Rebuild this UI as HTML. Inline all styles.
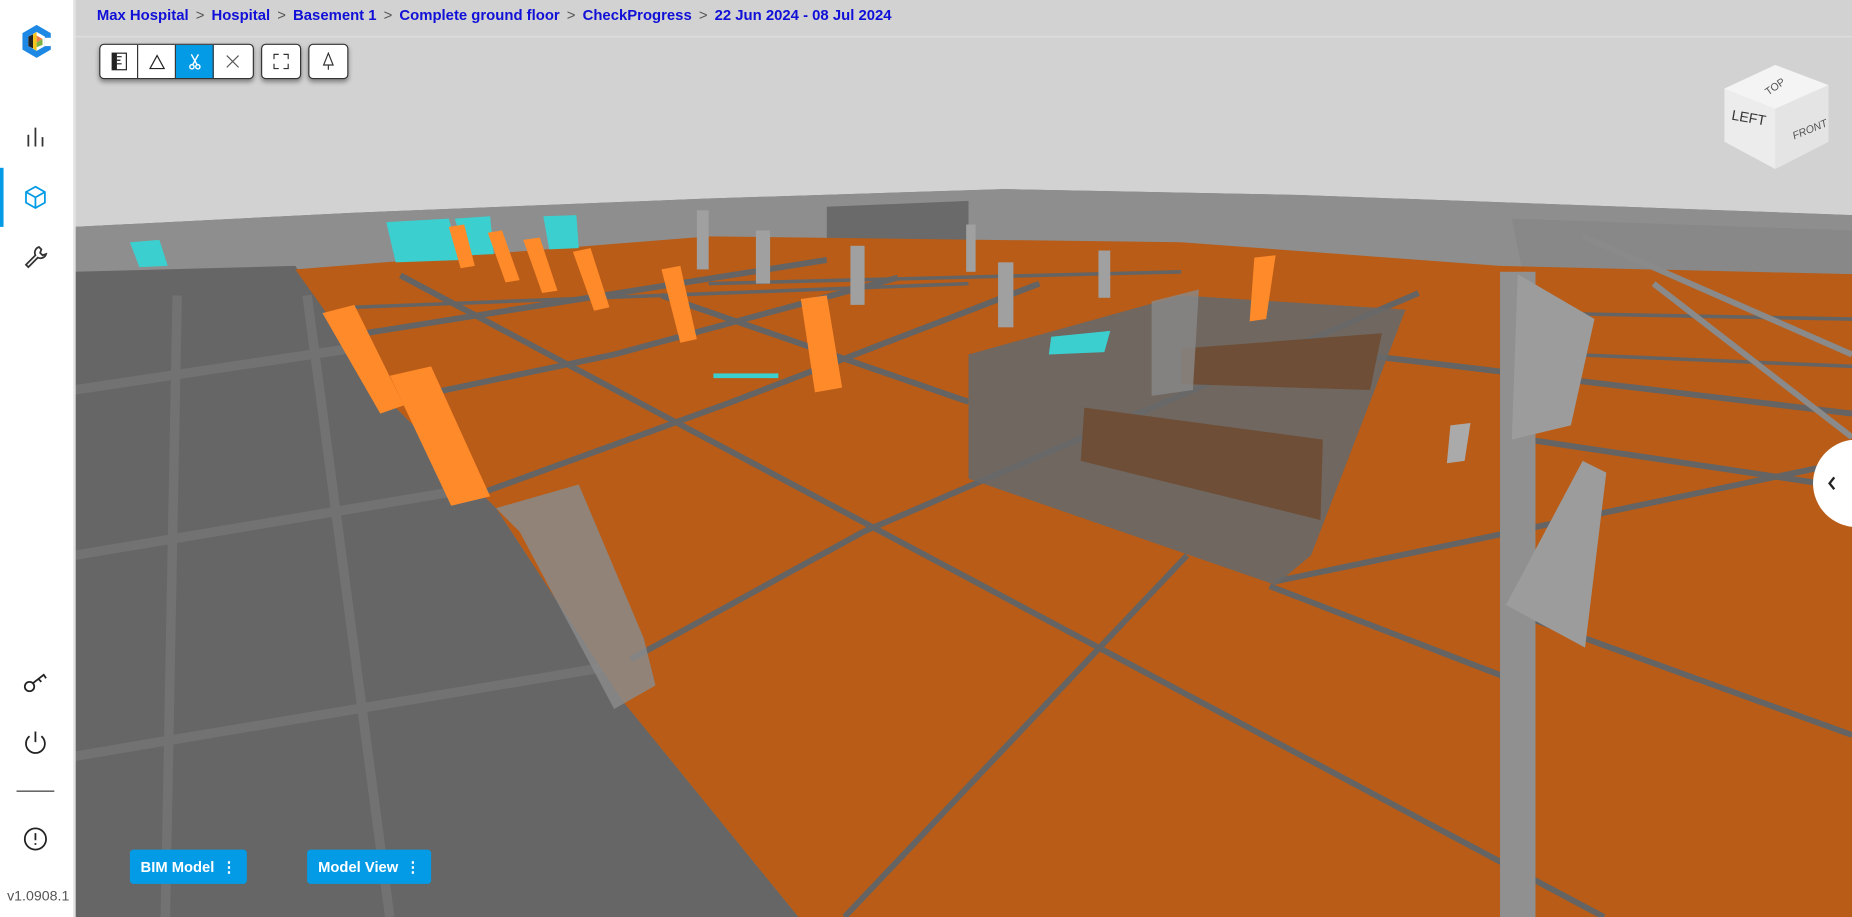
<!DOCTYPE html>
<html><head><meta charset="utf-8"><style>
html,body{margin:0;padding:0;width:1852px;height:917px;overflow:hidden;background:#d2d2d2}
#w{position:absolute;left:0;top:0;width:1568px;height:776px;transform-origin:0 0;transform:scale(1.18112,1.18170);font-family:"Liberation Sans",sans-serif}
#side{position:absolute;left:0;top:0;width:62px;height:776px;background:#fff;border-right:2px solid #e2e2e2}
.ic{position:absolute;left:19px}
#bc{position:absolute;left:82px;top:6px;font-weight:bold;font-size:12.6px;color:#1010d8;white-space:nowrap}
#bc span.s{color:#555;font-weight:normal;margin:0 6px}
.tb{position:absolute;top:37px;height:28px;background:#fff;border:1px solid #333;border-radius:4px;box-shadow:0 2px 4px rgba(0,0,0,.4);display:flex;overflow:hidden}
.tb div{width:32px;height:28px;display:flex;align-items:center;justify-content:center;border-right:1px solid #333;box-sizing:border-box}
.tb div:last-child{border-right:none}
.btn{position:absolute;top:719px;height:29px;background:#039be5;color:#fff;font-weight:bold;font-size:12.5px;border-radius:3px;display:flex;align-items:center;justify-content:center;gap:6px}
</style></head><body><div id="w">
<svg width="1568" height="776" viewBox="0 0 1568 776" style="position:absolute;left:0;top:0">
<rect width="1568" height="776" fill="#d2d2d2"/>
<line x1="63" y1="31" x2="1568" y2="31" stroke="#dcdcdc" stroke-width="1.5"/>
<polygon points="63,192 300,180 600,168 850,160 1100,165 1568,182 1568,776 63,776" fill="#7b7b7b"/>
<polygon points="63,192 300,180 600,168 850,160 1100,165 1568,182 1568,240 1000,215 600,210 63,240" fill="#8e8e8e"/>
<polygon points="700,175 820,170 820,205 700,210" fill="#6a6a6a"/>
<polygon points="1280,185 1568,195 1568,270 1290,235" fill="#888"/>
<polygon points="63,230 250,225 330,340 420,430 527,593 676,776 63,776" fill="#666"/>
<g stroke="#787878" stroke-width="8" opacity=".7"><line x1="63" y1="330" x2="330" y2="290"/><line x1="63" y1="470" x2="420" y2="410"/><line x1="63" y1="640" x2="540" y2="560"/><line x1="150" y1="250" x2="140" y2="776"/><line x1="260" y1="250" x2="330" y2="776"/></g>
<polygon points="250,228 600,200 1000,205 1270,225 1568,232 1568,776 676,776 527,593 420,430 330,340" fill="#b95c17"/>
<g stroke="#646464" stroke-width="5" fill="none">
<line x1="339" y1="233" x2="1358" y2="776"/>
<line x1="1075" y1="496" x2="1272" y2="572"/><line x1="1300" y1="525" x2="1568" y2="622"/>
<line x1="1280" y1="370" x2="1568" y2="413"/>
<line x1="1150" y1="300" x2="1568" y2="350"/>
<line x1="560" y1="250" x2="820" y2="340"/>
<line x1="715" y1="776" x2="1005" y2="470"/>
<line x1="534" y1="558" x2="731" y2="450" /><line x1="731" y1="450" x2="1201" y2="248"/>
<line x1="400" y1="420" x2="620" y2="340"/><line x1="620" y1="340" x2="880" y2="240"/>
<line x1="330" y1="340" x2="520" y2="300"/><line x1="520" y1="300" x2="760" y2="235"/>
<line x1="290" y1="285" x2="700" y2="220"/>
<line x1="1080" y1="492" x2="1568" y2="390"/>
</g>
<g stroke="#646464" stroke-width="3"><line x1="300" y1="260" x2="820" y2="240"/><line x1="600" y1="240" x2="1000" y2="230"/><line x1="1300" y1="265" x2="1568" y2="270"/><line x1="1330" y1="300" x2="1568" y2="310"/></g>
<g stroke="#8a8a8a" stroke-width="5"><line x1="1340" y1="200" x2="1568" y2="300"/><line x1="1400" y1="240" x2="1568" y2="370"/></g>
<polygon points="820,300 1000,250 1190,262 1110,470 1080,495 820,405" fill="#686868" opacity=".9"/>
<polygon points="1000,295 1170,282 1160,330 1000,325" fill="#6e4e36"/>
<polygon points="918,345 1120,372 1118,440 915,390" fill="#6e4e36"/>
<polygon points="975,255 1015,245 1010,330 975,335" fill="#8a8a8a" opacity=".8"/>
<polygon points="420,430 490,410 545,540 555,580 520,600 440,450" fill="#8a8a8a" opacity=".85"/>
<polygon points="1270,230 1300,230 1300,776 1270,776" fill="#909090"/>
<polygon points="1285,232 1350,270 1330,360 1280,372" fill="#9c9c9c"/>
<polygon points="1275,512 1340,390 1360,400 1342,548" fill="#9c9c9c"/>
<polygon points="1228,360 1245,358 1240,390 1225,392" fill="#aaa"/>
<g fill="#3ccfcf"><polygon points="327,188 380,185 390,220 335,222"/><polygon points="385,185 415,183 418,215 395,216"/><polygon points="460,183 488,182 490,210 465,211"/><polygon points="110,205 135,203 142,225 118,226"/><polygon points="890,285 940,280 935,298 888,300"/><rect x="604" y="316" width="55" height="4"/></g>
<g fill="#ff8a2a">
<polygon points="273,265 300,258 342,343 322,350"/><polygon points="330,318 365,310 415,420 382,428"/>
<polygon points="380,192 393,190 402,225 390,227"/><polygon points="413,197 425,195 440,237 428,239"/><polygon points="443,203 457,201 472,246 459,248"/><polygon points="485,213 500,210 516,260 503,263"/><polygon points="560,228 576,225 590,287 576,290"/><polygon points="678,253 700,250 713,328 690,332"/><polygon points="1062,218 1080,216 1072,270 1058,272"/>
</g>
<g fill="#a0a0a0"><rect x="590" y="178" width="10" height="50"/><rect x="640" y="195" width="12" height="45"/><rect x="720" y="208" width="12" height="50"/><rect x="845" y="222" width="13" height="55"/><rect x="930" y="212" width="10" height="40"/><rect x="818" y="190" width="8" height="40"/></g>
<polygon points="1503,55 1548,72 1548,120 1503,143 1460,120 1460,75" fill="#ececec"/>
<polygon points="1503,55 1548,72 1503,92 1460,75" fill="#f4f4f4"/>
<polygon points="1503,92 1548,72 1548,120 1503,143" fill="#e4e4e4"/>
<text x="1466" y="104" font-size="12" fill="#333" transform="rotate(10 1482 100)">LEFT</text>
<text x="1515" y="113" font-size="9" fill="#555" font-style="italic" transform="rotate(-22 1530 105)">FRONT</text>
<text x="1493" y="76" font-size="9" fill="#555" transform="rotate(-35 1503 72)">TOP</text>
<circle cx="1572" cy="409" r="37" fill="#fff"/>
<path d="M1553,404 l-4,5 4,5" stroke="#222" stroke-width="2" fill="none"/>
</svg>
<div id="side">
<svg class="ic" style="left:17px;top:20px" width="28" height="30" viewBox="0 0 28 30"><polygon points="14,1 26,8 26,22 14,29 2,22 2,8" fill="#1e88e5"/><polygon points="14,7 21,11 21,19 14,23 7,19 7,11" fill="#fff"/><polygon points="7,11 11,9 11,21 7,19" fill="#222"/><polygon points="11,9 11,21 14,23 14,7" fill="#f5c518"/><polygon points="14,10 19,13 14,16" fill="#f07d4a"/><polygon points="14,16 19,13 19,18 14,20" fill="#7cb342"/><rect x="21" y="12" width="6" height="7" fill="#fff"/></svg>
<svg class="ic" style="top:106px" width="22" height="20" viewBox="0 0 22 20" stroke="#333" stroke-width="1.5"><line x1="5" y1="8" x2="5" y2="18"/><line x1="11" y1="2" x2="11" y2="18"/><line x1="17" y1="10" x2="17" y2="18"/></svg>
<div style="position:absolute;left:0;top:142px;width:3px;height:50px;background:#039be5"></div>
<svg class="ic" style="top:156px" width="22" height="22" viewBox="0 0 22 22" fill="none" stroke="#039be5" stroke-width="1.5"><path d="M11 2 19 6.5 19 15.5 11 20 3 15.5 3 6.5Z M3 6.5 11 11 19 6.5 M11 11 11 20"/></svg>
<svg class="ic" style="top:206px" width="22" height="22" viewBox="0 0 22 22" fill="none" stroke="#333" stroke-width="1.5"><path d="M14 3a5 5 0 0 0-3 7l-8 8 2 2 8-8a5 5 0 0 0 7-3l-3 1-2-2 1-3z"/></svg>
<svg class="ic" style="top:566px" width="22" height="22" viewBox="0 0 22 22" fill="none" stroke="#222" stroke-width="1.5"><circle cx="6" cy="15" r="4"/><path d="M9 12 18 5 20 8 M14 9 16 11"/></svg>
<svg class="ic" style="top:617px" width="22" height="22" viewBox="0 0 22 22" fill="none" stroke="#222" stroke-width="1.5"><path d="M6 6a8 8 0 1 0 10 0 M11 2 11 11"/></svg>
<div style="position:absolute;left:14px;top:669px;width:32px;height:1px;background:#333"></div>
<svg class="ic" style="top:699px" width="22" height="22" viewBox="0 0 22 22" fill="none" stroke="#222" stroke-width="1.5"><circle cx="11" cy="11" r="9"/><path d="M11 6 11 12 M11 14.5 11 16"/></svg>
<div style="position:absolute;left:6px;top:751px;font-size:12px;color:#555">v1.0908.1</div>
</div>
<div id="bc">Max Hospital<span class="s">&gt;</span>Hospital<span class="s">&gt;</span>Basement 1<span class="s">&gt;</span>Complete ground floor<span class="s">&gt;</span>CheckProgress<span class="s">&gt;</span>22 Jun 2024 - 08 Jul 2024</div>
<div class="tb" style="left:84px;width:129px">
<div><svg width="14" height="16"><rect x="1" y="1" width="12" height="14" fill="#fff" stroke="#222"/><path d="M1 1h4v14H1z" fill="#222"/><path d="M5 4h4M5 7h3M5 10h4" stroke="#222"/></svg></div>
<div><svg width="14" height="14" fill="none" stroke="#222"><path d="M7 2 13 13 1 13Z"/></svg></div>
<div style="background:#039be5"><svg width="12" height="14" fill="none" stroke="#fff" stroke-width="1.2"><path d="M3 1 8 10 M9 1 4 10"/><circle cx="3.5" cy="11.5" r="1.8"/><circle cx="8.5" cy="11.5" r="1.8"/></svg></div>
<div><svg width="12" height="12" stroke="#555"><path d="M1 1 11 11M11 1 1 11"/></svg></div>
</div>
<div class="tb" style="left:221px;width:32px"><div><svg width="14" height="14" fill="none" stroke="#333"><path d="M1 5V1h4M9 1h4v4M13 9v4H9M5 13H1V9"/></svg></div></div>
<div class="tb" style="left:261px;width:32px"><div><svg width="10" height="16" fill="none" stroke="#333"><path d="M5 1 1 11 9 11Z M5 11V15"/></svg></div></div>
<div class="btn" style="left:110px;width:99px">BIM Model <span>⋮</span></div>
<div class="btn" style="left:260px;width:105px">Model View <span>⋮</span></div>
</div></body></html>
